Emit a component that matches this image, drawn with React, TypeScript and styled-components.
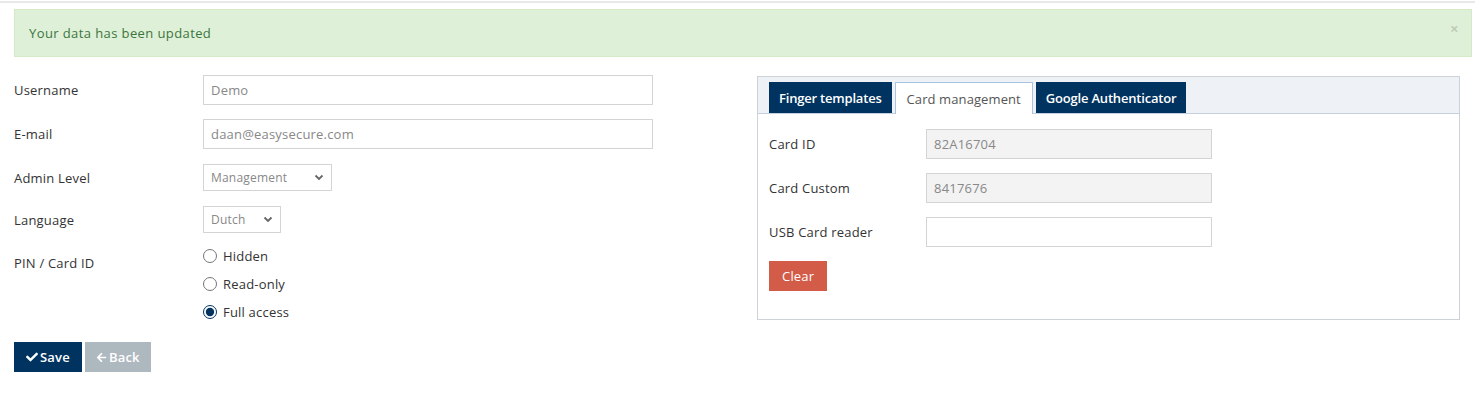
import React, { useState } from 'react';
import styled, { createGlobalStyle } from 'styled-components';
import { FaCheck, FaArrowLeft } from 'react-icons/fa';

const GlobalStyle = createGlobalStyle`
  body {
    margin: 0;
    background: #fff;
    font-family: 'Open Sans', 'Noto Sans', sans-serif;
    font-size: 13px;
    letter-spacing: 0.2px;
    color: #333;
  }
`;

const TopLine = styled.div`
  height: 2px;
  margin-top: 1px;
  background: #e8e8e8;
`;

const Page = styled.div`
  padding: 6px 3px 20px 14px;
`;

const Alert = styled.div`
  position: relative;
  background: #dff0d8;
  border: 1px solid #d6e9c6;
  color: #3c763d;
  padding: 14px 14px;
  line-height: 18px;
  letter-spacing: 0.4px;
  margin-bottom: 18px;
`;

const Close = styled.span`
  position: absolute;
  right: 12px;
  top: 9px;
  font-size: 15px;
  font-weight: 700;
  color: #000;
  opacity: 0.15;
  cursor: pointer;
`;

const Columns = styled.div`
  display: grid;
  grid-template-columns: 729px 703px;
  column-gap: 14px;
  align-items: start;
`;

const FormRow = styled.div<{ $gap: number }>`
  display: grid;
  grid-template-columns: 189px auto;
  align-items: center;
  margin-bottom: ${(p) => p.$gap}px;
`;

const Label = styled.label<{ $top?: boolean }>`
  color: #333;
  line-height: 18px;
  align-self: ${(p) => (p.$top ? 'start' : 'center')};
  padding-top: ${(p) => (p.$top ? '12px' : '0')};
`;

const Input = styled.input<{ $width: number }>`
  box-sizing: border-box;
  width: ${(p) => p.$width}px;
  height: 30px;
  padding: 0 7px;
  border: 1px solid #d4d4d4;
  background: #fff;
  color: #888;
  font-family: inherit;
  font-size: 13px;
  letter-spacing: 0.2px;
  outline: none;

  &:disabled {
    background: #f3f3f3;
  }
`;

const SelectWrap = styled.div<{ $width: number }>`
  position: relative;
  width: ${(p) => p.$width}px;
`;

const Select = styled.select`
  box-sizing: border-box;
  width: 100%;
  height: 27px;
  padding: 0 7px;
  appearance: none;
  border: 1px solid #d4d4d4;
  background: #fff;
  color: #888;
  font-family: inherit;
  font-size: 12px;
  letter-spacing: 0.2px;
  outline: none;
`;

const Chevron = styled.svg`
  position: absolute;
  right: 8px;
  top: 10px;
  pointer-events: none;
`;

const RadioList = styled.div`
  display: flex;
  flex-direction: column;
`;

const RadioItem = styled.label`
  display: flex;
  align-items: center;
  height: 28px;
  gap: 6px;
  color: #333;
  cursor: pointer;

  input {
    margin: 0;
    width: 14px;
    height: 14px;
    accent-color: #00335f;
  }
`;

const Actions = styled.div`
  display: flex;
  gap: 3px;
`;

const Button = styled.button<{ $variant: 'primary' | 'muted' | 'danger' }>`
  display: inline-flex;
  align-items: center;
  gap: 2px;
  height: 30px;
  padding: 0 ${(p) => (p.$variant === 'primary' ? '12px' : p.$variant === 'danger' ? '13px' : '11px')};
  border: none;
  color: #fff;
  font-family: inherit;
  font-size: 13px;
  letter-spacing: 0.2px;
  font-weight: ${(p) => (p.$variant === 'danger' ? 400 : 600)};
  cursor: pointer;
  background: ${(p) =>
    p.$variant === 'primary' ? '#00335f' : p.$variant === 'muted' ? '#aeb8bf' : '#d35c48'};
`;

const Panel = styled.div`
  margin-top: 1px;
  border: 1px solid #cdd2d8;
`;

const TabBar = styled.div`
  display: flex;
  gap: 3px;
  padding: 5px 11px 0;
  background: #eef1f6;
  border-bottom: 1px solid #c5d0de;
  height: 31px;
`;

const Tab = styled.div<{ $active?: boolean }>`
  display: flex;
  align-items: center;
  padding: 0 ${(p) => (p.$active ? '11px' : '10px')};
  height: ${(p) => (p.$active ? '32px' : '31px')};
  box-sizing: border-box;
  background: ${(p) => (p.$active ? '#fff' : '#00335f')};
  color: ${(p) => (p.$active ? '#555' : '#fff')};
  font-weight: ${(p) => (p.$active ? 400 : 600)};
  letter-spacing: ${(p) => (p.$active ? '0.1px' : '-0.2px')};
  border: ${(p) => (p.$active ? '1px solid #a9c4e0' : 'none')};
  border-bottom: none;
  cursor: pointer;
`;

const PanelBody = styled.div`
  padding: 15px 11px 28px;
`;

const PanelRow = styled.div`
  display: grid;
  grid-template-columns: 157px auto;
  align-items: center;
  margin-bottom: 14px;
`;

export default function App() {
  const [access, setAccess] = useState('full');
  const [usb, setUsb] = useState('');

  return (
    <>
      <GlobalStyle />
      <TopLine />
      <Page>
        <Alert>
          Your data has been updated
          <Close>×</Close>
        </Alert>
        <Columns>
          <div>
            <FormRow $gap={14}>
              <Label>Username</Label>
              <Input $width={450} defaultValue="Demo" />
            </FormRow>
            <FormRow $gap={15}>
              <Label>E-mail</Label>
              <Input $width={450} defaultValue="daan@easysecure.com" />
            </FormRow>
            <FormRow $gap={15}>
              <Label>Admin Level</Label>
              <SelectWrap $width={129}>
                <Select defaultValue="Management">
                  <option>Management</option>
                </Select>
                <Chevron width="10" height="7" viewBox="0 0 10 7">
                  <path d="M1.5 1.5 L5 5 L8.5 1.5" fill="none" stroke="#666" strokeWidth="1.8" />
                </Chevron>
              </SelectWrap>
            </FormRow>
            <FormRow $gap={9}>
              <Label>Language</Label>
              <SelectWrap $width={78}>
                <Select defaultValue="Dutch">
                  <option>Dutch</option>
                </Select>
                <Chevron width="10" height="7" viewBox="0 0 10 7">
                  <path d="M1.5 1.5 L5 5 L8.5 1.5" fill="none" stroke="#666" strokeWidth="1.8" />
                </Chevron>
              </SelectWrap>
            </FormRow>
            <FormRow $gap={16}>
              <Label $top>PIN / Card ID</Label>
              <RadioList>
                {[
                  ['hidden', 'Hidden'],
                  ['read', 'Read-only'],
                  ['full', 'Full access'],
                ].map(([value, text]) => (
                  <RadioItem key={value}>
                    <input
                      type="radio"
                      name="access"
                      checked={access === value}
                      onChange={() => setAccess(value)}
                    />
                    {text}
                  </RadioItem>
                ))}
              </RadioList>
            </FormRow>
            <Actions>
              <Button $variant="primary">
                <FaCheck size={12} /> Save
              </Button>
              <Button $variant="muted">
                <FaArrowLeft size={11} /> Back
              </Button>
            </Actions>
          </div>

          <Panel>
            <TabBar>
              <Tab>Finger templates</Tab>
              <Tab $active>Card management</Tab>
              <Tab>Google Authenticator</Tab>
            </TabBar>
            <PanelBody>
              <PanelRow>
                <Label>Card ID</Label>
                <Input $width={286} defaultValue="82A16704" disabled />
              </PanelRow>
              <PanelRow>
                <Label>Card Custom</Label>
                <Input $width={286} defaultValue="8417676" disabled />
              </PanelRow>
              <PanelRow>
                <Label>USB Card reader</Label>
                <Input $width={286} value={usb} onChange={(e) => setUsb(e.target.value)} />
              </PanelRow>
              <Button $variant="danger" onClick={() => setUsb('')}>
                Clear
              </Button>
            </PanelBody>
          </Panel>
        </Columns>
      </Page>
    </>
  );
}
